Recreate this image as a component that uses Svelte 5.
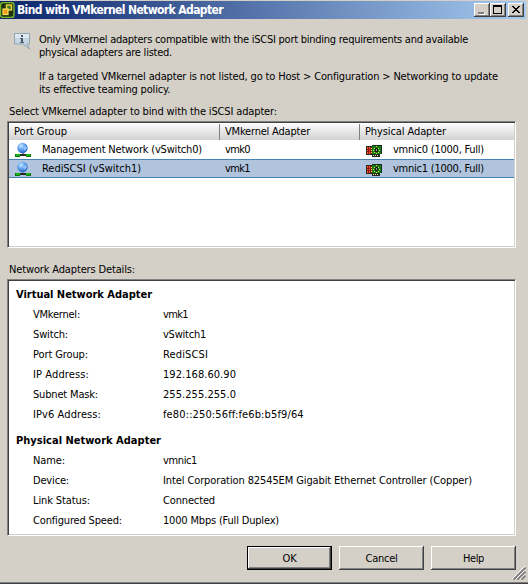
<script>
  const intro = [
    ['Only VMkernel adapters compatible with the iSCSI port binding requirements and available', 429],
    ['physical adapters are listed.', 133],
    ['If a targeted VMkernel adapter is not listed, go to Host > Configuration > Networking to update', 459],
    ['its effective teaming policy.', 131]
  ];
  const rows = [
    { group: 'Management Network (vSwitch0)', gw: 160, vmk: 'vmk0', nic: 'vmnic0 (1000, Full)' },
    { group: 'RediSCSI (vSwitch1)', gw: 99, vmk: 'vmk1', nic: 'vmnic1 (1000, Full)', selected: true }
  ];
  const details = [
    { title: 'Virtual Network Adapter', tw: 136, items: [
      ['VMkernel:', 47, 'vmk1', 25],
      ['Switch:', 35, 'vSwitch1', 43],
      ['Port Group:', 55, 'RediSCSI', 45],
      ['IP Address:', 56, '192.168.60.90', 73],
      ['Subnet Mask:', 65, '255.255.255.0', 73],
      ['IPv6 Address:', 68, 'fe80::250:56ff:fe6b:b5f9/64', 141]
    ] },
    { title: 'Physical Network Adapter', tw: 145, items: [
      ['Name:', 32, 'vmnic1', 34],
      ['Device:', 36, 'Intel Corporation 82545EM Gigabit Ethernet Controller (Copper)', 309],
      ['Link Status:', 57, 'Connected', 52],
      ['Configured Speed:', 89, '1000 Mbps (Full Duplex)', 116]
    ] }
  ];

  // Tightens the tracking of a label to the advance width given for it.
  function fit(node, width) {
    node.style.letterSpacing = '0px';
    const natural = node.getBoundingClientRect().width;
    node.style.letterSpacing = (width - natural) / node.textContent.length + 'px';
  }
</script>

{#snippet label(text, width)}<span class="label" use:fit={width}>{text}</span>{/snippet}

{#snippet globe()}
  <svg class="globe" width="16" height="16" viewBox="0 0 16 16">
    <defs>
      <radialGradient id="ball" cx=".38" cy=".3" r=".75">
        <stop offset="0" stop-color="#d4ecff" /><stop offset=".4" stop-color="#6aaaf2" /><stop offset="1" stop-color="#2360c6" />
      </radialGradient>
    </defs>
    <path d="M7 10h2v3H7z" fill="#8c9aa4" />
    <circle cx="7.5" cy="6" r="5.2" fill="url(#ball)" />
    <path d="M4 3.5l3-1 1 2-2 2-2-1zM9 5l2-1 1 2-2 3-2-2z" fill="#a9d2ff" opacity=".7" />
    <path d="M5 12h6v2H5z" fill="#242c28" shape-rendering="crispEdges" />
    <path d="M0 12h5v3H0zM11 12h5v3h-5z" fill="#087808" shape-rendering="crispEdges" />
    <path d="M1 12h4v2H1zM11 12h4v2h-4z" fill="#18b418" shape-rendering="crispEdges" />
  </svg>
{/snippet}

{#snippet card()}
  <svg class="card" width="16" height="12" viewBox="0 0 16 12" shape-rendering="crispEdges">
    <path d="M0 1h6V0h10v9h-2v3H6v-2H0z" fill="#202c20" />
    <path d="M1 2h5v7H1z" fill="#8c1c14" />
    <path d="M6 1h9v8H6z" fill="#107c18" />
    <path d="M1 2h1v2H1zM3 2h1v2H3zM1 5h1v1H1zM3 5h1v1H3zM1 7h1v2H1zM3 7h1v2H3z" fill="#ff5028" />
    <path d="M5 3h1v1H5zM5 5h1v1H5zM5 7h1v1H5zM8 3h1v1H8zM10 1h1v1h-1zM12 3h1v1h-1zM7 5h1v1H7zM13 5h1v1h-1zM8 7h1v1H8zM10 8h1v1h-1zM12 7h1v1h-1z" fill="#f4dc34" />
    <path d="M9 3h3v4H9z" fill="#182018" /><path d="M10 4h1v2h-1z" fill="#8c9c80" />
    <path d="M7 10h1v1H7zM9 10h1v1H9zM11 10h1v1h-1z" fill="#f0e090" />
  </svg>
{/snippet}

<main class="window">
  <header>
    <svg class="logo" width="15" height="16" viewBox="0 0 15 16">
      <rect x=".5" y=".5" width="13.5" height="15" rx="2.5" fill="#1c3414" stroke="#79b82e" stroke-width="1.4" />
      <rect x="6.5" y="3" width="5" height="5" fill="#4a7c2a" stroke="#f2d23c" stroke-width="1.4" />
      <rect x="3" y="7" width="5" height="5.5" fill="#f39a20" stroke="#f8df58" stroke-width="1.2" />
    </svg>
    <h1>{@render label('Bind with VMkernel Network Adapter', 206)}</h1>
    <div class="controls">
      <button class="ctl" aria-label="Minimize"><svg width="16" height="14" shape-rendering="crispEdges"><path d="M5 10h6v2H5z" fill="#fff" /><path d="M4 9h6v2H4z" fill="#808080" /></svg></button>
      <button class="ctl" aria-label="Maximize"><svg width="16" height="14" shape-rendering="crispEdges"><path d="M3 2h9v9H3zM4 4v6h7V4z" fill="#000" fill-rule="evenodd" /></svg></button>
      <button class="ctl close" aria-label="Close"><svg width="16" height="14" shape-rendering="crispEdges"><path d="M4 3h2v1h1v1h2V4h1V3h2v1h-1v1h-1v1H9v1h1v1h1v1h1v1h-2V9H9V8H7v1H6v1H4V9h1V8h1V7h1V6H6V5H5V4H4z" fill="#000" /></svg></button>
    </div>
  </header>

  <section class="intro">
    <svg class="info" width="17" height="17" viewBox="0 0 17 17">
      <path d="M.5.5h15v10.500h-2.500l2.500 5-6.500-5H.5z" fill="#c4d6e4" stroke="#94a5b1" />
      <path d="M1 1h14v4H1z" fill="#dce9f2" />
      <path d="M7 2h2v2H7zM6 5h3v4h1v1H6V9h1V6H6z" fill="#4c5a66" shape-rendering="crispEdges" />
    </svg>
    <div class="copy">
      {#each intro as [text, width], i}<p class:gap={i === 2}>{@render label(text, width)}</p>{/each}
    </div>
  </section>

  <p class="caption">{@render label('Select VMkernel adapter to bind with the iSCSI adapter:', 268)}</p>
  <div class="sunken list">
    <div class="row head">
      <div class="c1">{@render label('Port Group', 53)}</div>
      <div class="c2">{@render label('VMkernel Adapter', 85)}</div>
      <div class="c3">{@render label('Physical Adapter', 81)}</div>
    </div>
    {#each rows as r}
      <div class="row" class:selected={r.selected}>
        <div class="c1">{@render globe()}{@render label(r.group, r.gw)}</div>
        <div class="c2">{@render label(r.vmk, 25)}</div>
        <div class="c3">{@render card()}{@render label(r.nic, 91)}</div>
      </div>
    {/each}
  </div>

  <p class="caption second">{@render label('Network Adapters Details:', 126)}</p>
  <div class="sunken details">
    {#each details as d}
      <h2>{@render label(d.title, d.tw)}</h2>
      <dl>
        {#each d.items as [k, kw, v, vw]}
          <div><dt>{@render label(k, kw)}</dt><dd>{@render label(v, vw)}</dd></div>
        {/each}
      </dl>
    {/each}
  </div>

  <footer>
    <button class="push default">{@render label('OK', 14)}</button>
    <button class="push">{@render label('Cancel', 32)}</button>
    <button class="push">{@render label('Help', 21)}</button>
  </footer>
  <svg class="grip" width="14" height="14" viewBox="0 0 14 14">
    <path d="M0 13L13 0M4 13l9-9M8 13l5-5" stroke="#fff" />
    <path d="M1.500 13.500l12-12M5.500 13.500l8-8M9.500 13.500l4-4" stroke="#777" stroke-width="1.7" />
  </svg>
</main>

<style>
  .window {
    box-sizing: border-box; position: relative; width: 528px; height: 584px; overflow: hidden;
    display: flex; flex-direction: column; padding-top: 1px;
    background: #d4d0c8; border-bottom: 1px solid #404040; box-shadow: inset 0 -1px #808080;
    font: 11px/13px "DejaVu Sans Condensed", "DejaVu Sans", sans-serif; font-stretch: condensed; color: #000;
  }
  .label { display: inline-block; white-space: pre; }
  h1, h2, p, dl, dd { margin: 0; font-size: 11px; }
  header {
    flex: none; height: 18px; width: 526px; display: flex; align-items: center;
    background: linear-gradient(90deg, #0a246a, #a6caf0);
  }
  .logo { flex: none; margin-right: 2px; }
  h1 { flex: 1; color: #fff; line-height: 14px; padding-bottom: 1px; font-size: 12px; }
  .controls { display: flex; padding-right: 2px; }
  .ctl {
    width: 16px; height: 14px; padding: 0; border: 0; background: #d4d0c8;
    box-shadow: inset -1px -1px #404040, inset 1px 1px #fff, inset -2px -2px #808080;
  }
  .ctl svg { display: block; }
  .close { margin-left: 2px; }
  .intro { display: flex; padding: 14px 0 0 14px; height: 85px; box-sizing: border-box; }
  .info { flex: none; margin-right: 8px; }
  .copy { white-space: nowrap; }
  .copy p { height: 13px; }
  .copy .gap { margin-top: 11px; }
  .caption { margin: 1px 0 0 9px; height: 13px; }
  .sunken {
    box-sizing: border-box; margin-left: 7px; width: 509px; background: #fff; border: 1px solid;
    border-color: #808080 #fff #fff #808080;
    box-shadow: inset 1px 1px #404040, inset -1px -1px #d4d0c8;
  }
  .list { margin-top: 3px; height: 127px; padding: 2px 1px 1px; }
  .row { display: flex; height: 19px; box-sizing: border-box; align-items: center; }
  .row > div { display: flex; align-items: center; height: 100%; box-sizing: border-box; }
  .head { height: 16px; background: linear-gradient(#fafafa, #d2d2d2); }
  .head .label { margin-bottom: 2px; }
  .c1 { width: 210px; padding-left: 5px; }
  .c2 { width: 140px; padding-left: 6px; }
  .c3 { flex: 1; padding-left: 6px; }
  .head .c2, .head .c3 { border-left: 1px solid #808080; padding-left: 5px; }
  .selected { background: #b0c4de; border: solid #4682b4; border-width: 1px 0; }
  .globe { margin: 1px 11px 0 1px; }
  .card { margin: 2px 11px 0 1px; }
  .second { margin-top: 15px; }
  .details { margin-top: 3px; height: 257px; padding: 7px 0 0 8px; }
  h2 { line-height: 16px; height: 17px; }
  dl { padding-left: 17px; margin-bottom: 9px; }
  dl div { display: flex; height: 20px; align-items: center; }
  dt { width: 130px; }
  footer { display: flex; gap: 7px; padding: 10px 0 0 247px; }
  .push {
    width: 85px; height: 24px; border: 0; padding: 0; background: #d4d0c8; font: inherit; color: #000;
    box-shadow: inset -1px -1px #404040, inset 1px 1px #fff, inset -2px -2px #808080;
  }
  .default { box-shadow: inset 0 0 0 1px #000, inset -2px -2px #404040, inset 2px 2px #fff, inset -3px -3px #808080; }
  .grip { position: absolute; right: 2px; bottom: 3px; }
</style>
